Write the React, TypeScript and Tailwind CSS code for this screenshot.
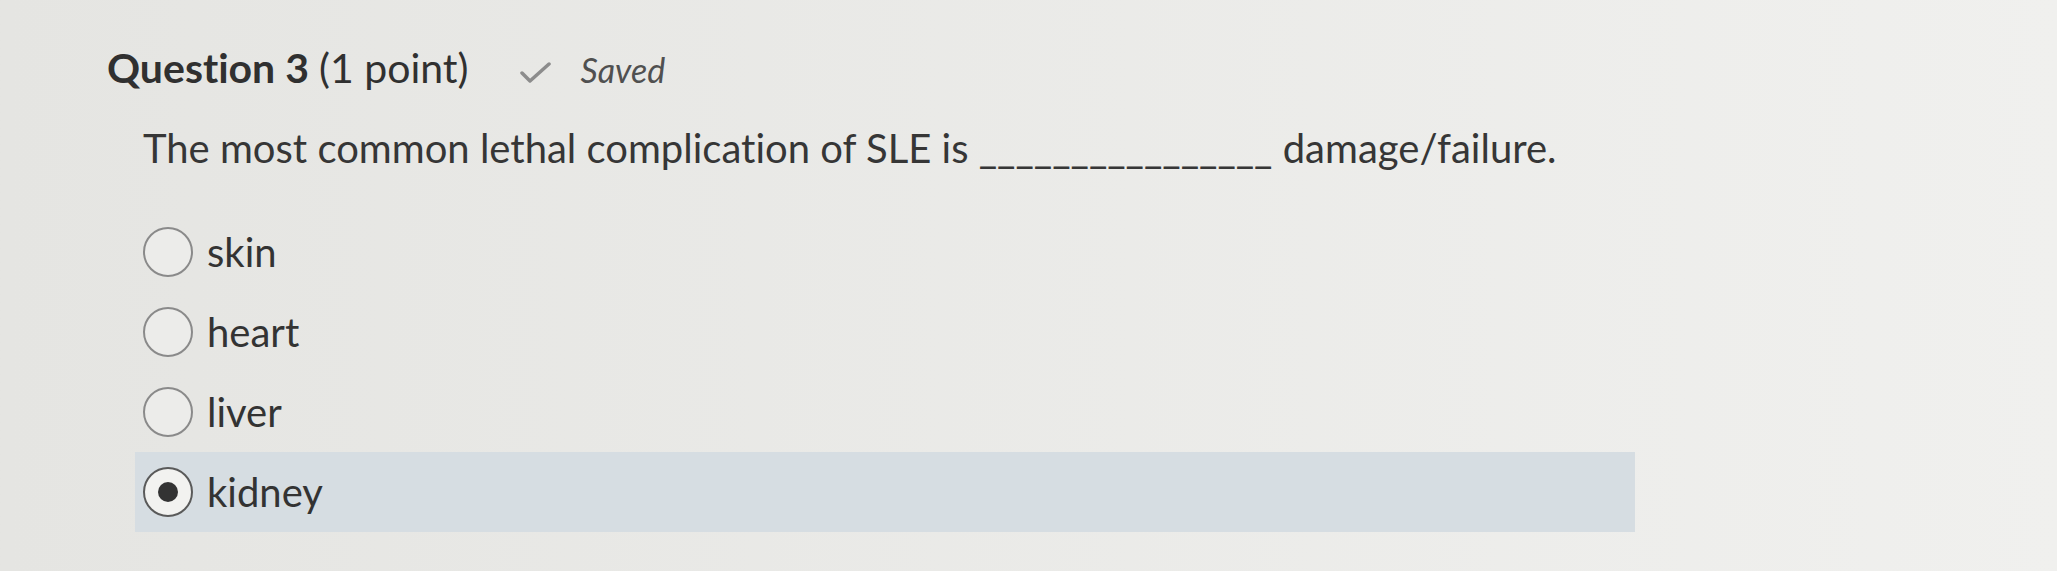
import React from 'react';

const options = [
  { label: 'skin', selected: false },
  { label: 'heart', selected: false },
  { label: 'liver', selected: false },
  { label: 'kidney', selected: true },
];

const Radio: React.FC<{ checked: boolean }> = ({ checked }) => (
  <span
    className={`flex h-[50px] w-[50px] shrink-0 items-center justify-center rounded-full border-2 ${
      checked ? 'border-[#5a5a5a] bg-[#f2f2f0]' : 'border-[#8a8a8a] bg-[#ececea]'
    }`}
  >
    {checked && <span className="h-[20px] w-[20px] rounded-full bg-[#333]" />}
  </span>
);

export default function App() {
  return (
    <div
      className="h-[571px] w-full bg-linear-to-r from-[#e5e5e2] to-[#f0f0ee] pl-[107px] pt-[44px] text-[#363636]"
      style={{ fontFamily: 'Lato, "Open Sans", sans-serif', fontVariantLigatures: 'none' }}
    >
      <div className="flex items-baseline leading-[48px]">
        <h2 className="text-[41px] font-bold text-[#303030]">
          Question 3 <span className="font-normal">(1 point)</span>
        </h2>
        <span className="ml-[52px] flex items-baseline gap-[28px] text-[34px] italic text-[#505050]">
          <svg width="32" height="22" viewBox="0 0 32 22" className="self-center translate-y-[3px]">
            <polyline
              points="2,11 10,19 29,2"
              fill="none"
              stroke="#8c8c8c"
              strokeWidth="3.5"
              strokeLinecap="round"
              strokeLinejoin="round"
            />
          </svg>
          Saved
        </span>
      </div>

      <p className="ml-[36px] mt-[30px] text-[40px] leading-[48px]">
        The most common lethal complication of SLE is ________________ damage/failure.
      </p>

      <ul className="ml-[28px] mt-[40px] w-[1500px]">
        {options.map((o) => (
          <li
            key={o.label}
            className={`flex h-[80px] items-center gap-[14px] pl-[8px] ${o.selected ? 'bg-[#d6dde2]' : ''}`}
          >
            <Radio checked={o.selected} />
            <span className="text-[40px] leading-[48px] text-[#333]">{o.label}</span>
          </li>
        ))}
      </ul>
    </div>
  );
}
